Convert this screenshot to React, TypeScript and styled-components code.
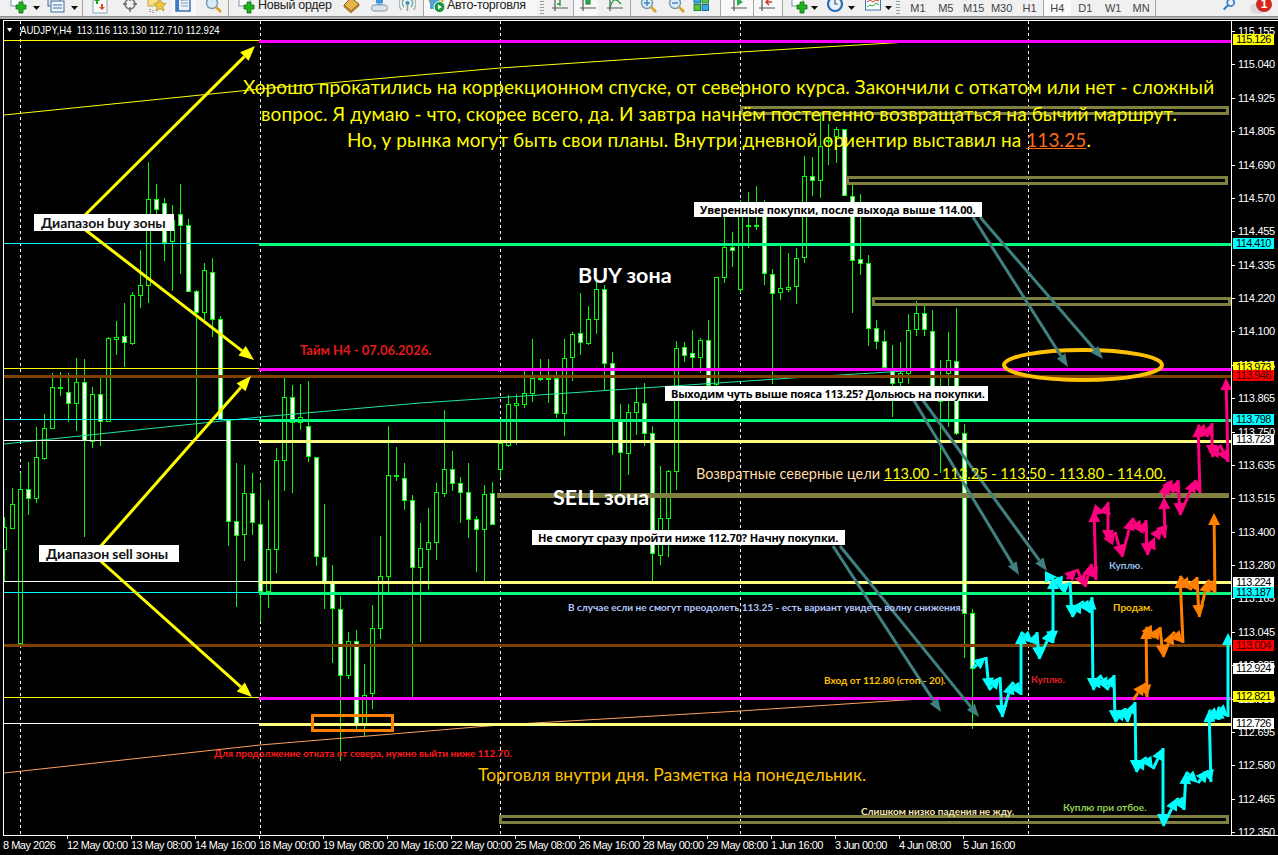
import React, { FC } from 'react';
import styled, { createGlobalStyle } from 'styled-components';

const GlobalStyle = createGlobalStyle`
  html, body { margin: 0; padding: 0; background: #000; }
  #root { width: 1278px; height: 855px; }
`;

// plot origin on the page, notes keep page coordinates
const PLOT_X = 4;
const PLOT_Y = 21;
const PLOT_W = 1227;
const PLOT_H = 814;

type Candle = ['u' | 'd', number, number, number, number];

// type, high, body top, body bottom, low (px), one bar every 8px from x=4
const candles: Candle[] = [
  ['u', 517, 527, 549, 581], ['u', 488, 504, 528, 528], ['u', 473, 489, 643, 643], ['d', 462, 489, 498, 515],
  ['u', 427, 457, 498, 503], ['u', 414, 428, 458, 460], ['u', 373, 387, 428, 429], ['u', 372, 387, 388, 396],
  ['d', 373, 392, 403, 422], ['u', 358, 382, 403, 431], ['d', 359, 382, 440, 537], ['u', 387, 394, 441, 448],
  ['d', 378, 394, 421, 446], ['u', 337, 338, 421, 422], ['u', 321, 337, 339, 355], ['d', 303, 336, 342, 367],
  ['u', 292, 295, 343, 345], ['u', 250, 285, 295, 308], ['u', 162, 199, 285, 303], ['d', 184, 199, 209, 220],
  ['d', 198, 203, 242, 261], ['u', 205, 220, 241, 291], ['d', 184, 214, 225, 274], ['d', 219, 225, 291, 292],
  ['d', 290, 291, 312, 440], ['u', 263, 270, 312, 320], ['d', 258, 272, 319, 337], ['d', 316, 319, 419, 420],
  ['d', 420, 420, 521, 546], ['d', 463, 521, 535, 607], ['u', 465, 493, 534, 561], ['d', 473, 493, 522, 535],
  ['d', 483, 524, 591, 622], ['u', 500, 549, 591, 608], ['u', 448, 460, 549, 573], ['u', 378, 397, 460, 491],
  ['d', 385, 397, 422, 493], ['u', 384, 417, 422, 430], ['d', 381, 426, 456, 462], ['d', 457, 457, 556, 566],
  ['d', 504, 557, 582, 609], ['d', 565, 583, 608, 663], ['d', 596, 609, 675, 761], ['u', 632, 641, 675, 679],
  ['d', 630, 641, 724, 730], ['u', 664, 695, 725, 736], ['u', 605, 628, 693, 709], ['u', 536, 576, 628, 639],
  ['u', 426, 475, 576, 593], ['u', 447, 475, 476, 481], ['d', 463, 478, 500, 510], ['d', 495, 500, 567, 700],
  ['u', 523, 548, 567, 642], ['u', 508, 542, 549, 590], ['u', 483, 492, 542, 560], ['u', 410, 469, 493, 497],
  ['d', 451, 469, 483, 491], ['d', 477, 483, 492, 523], ['d', 463, 492, 519, 538], ['d', 516, 519, 529, 572],
  ['u', 485, 494, 529, 581], ['d', 482, 493, 524, 524], ['u', 422, 443, 469, 478], ['u', 395, 404, 445, 447],
  ['u', 394, 403, 405, 445], ['u', 371, 393, 404, 408], ['u', 339, 378, 393, 402], ['u', 359, 378, 379, 381],
  ['u', 359, 378, 379, 403], ['d', 371, 378, 413, 418], ['u', 339, 358, 413, 436], ['u', 332, 334, 357, 381],
  ['d', 293, 333, 342, 355], ['u', 306, 319, 343, 345], ['u', 281, 289, 319, 334], ['d', 285, 289, 363, 391],
  ['d', 352, 363, 420, 455], ['d', 404, 421, 452, 491], ['u', 404, 412, 453, 475], ['u', 387, 402, 412, 435],
  ['d', 383, 403, 433, 446], ['d', 426, 433, 553, 581], ['u', 466, 518, 555, 565], ['u', 470, 471, 518, 557],
  ['u', 341, 348, 471, 490], ['d', 342, 347, 355, 362], ['d', 330, 353, 357, 371], ['u', 338, 340, 357, 373],
  ['d', 320, 340, 385, 390], ['u', 277, 277, 384, 387], ['u', 217, 247, 277, 283], ['d', 232, 247, 250, 267],
  ['u', 200, 210, 289, 293], ['u', 192, 225, 226, 248], ['u', 186, 225, 226, 230], ['d', 200, 210, 273, 285],
  ['d', 269, 274, 293, 384], ['u', 246, 288, 292, 300], ['u', 253, 287, 289, 292], ['u', 248, 258, 286, 304],
  ['u', 156, 176, 257, 263], ['d', 157, 176, 180, 196], ['u', 115, 146, 180, 198], ['u', 124, 140, 141, 165],
  ['u', 127, 129, 136, 163], ['d', 129, 129, 195, 196], ['d', 185, 196, 260, 313], ['d', 194, 259, 263, 275],
  ['d', 255, 263, 328, 346], ['d', 320, 328, 341, 349], ['d', 330, 341, 367, 370], ['d', 345, 370, 383, 417],
  ['u', 342, 373, 382, 386], ['u', 314, 330, 373, 384], ['u', 301, 313, 329, 336], ['d', 306, 313, 329, 336],
  ['d', 310, 331, 386, 390], ['u', 360, 400, 401, 473], ['u', 332, 360, 373, 427], ['d', 308, 361, 433, 435],
  ['d', 424, 433, 613, 658], ['d', 609, 613, 668, 729],
];

const periods = [20, 260, 500, 740, 1028];

// left thin segment and heavy level, both end at the right of the plot
const levels = [
  { y: 41, thin: '#ffff00', thick: '#ff00ff' },
  { y: 244, thin: '#00ffff', thick: '#00ff7f' },
  { y: 369, thin: '#ffff00', thick: '#ff00ff' },
  { y: 420, thin: '#00ffff', thick: '#00ff7f' },
  { y: 441, thin: '#ffffff', thick: '#ffff80' },
  { y: 582, thin: '#ffffff', thick: '#ffff80' },
  { y: 593, thin: '#00ffff', thick: '#00ff7f' },
  { y: 698, thin: '#ffff00', thick: '#ff00ff' },
  { y: 724, thin: '#ffffff', thick: '#ffff80' },
];

const cyanWave: [number, number][] = [
  [973, 668], [986, 657], [989, 690], [1000, 677], [1002, 717], [1012, 682], [1021, 695], [1021, 632], [1033, 643],
  [1037, 632], [1039, 659], [1052, 630], [1053, 643], [1053, 577], [1057, 577], [1062, 589], [1070, 582], [1072, 617],
  [1082, 601], [1090, 613], [1092, 597], [1093, 690], [1100, 675], [1107, 690], [1114, 675], [1115, 722], [1125, 708],
  [1127, 722], [1135, 702], [1136, 772], [1145, 757], [1153, 769], [1163, 748], [1163, 826], [1177, 798], [1184, 810],
  [1186, 772], [1198, 783], [1208, 770], [1211, 782], [1209, 710], [1219, 720], [1218, 707], [1228, 717], [1228, 633],
];

const pinkWave: [number, number][] = [
  [1067, 579], [1077, 569], [1085, 587], [1091, 564], [1096, 580], [1094, 510], [1105, 513], [1108, 502], [1108, 542],
  [1115, 532], [1122, 557], [1132, 518], [1142, 533], [1146, 520], [1147, 555], [1155, 537], [1162, 527], [1165, 538],
  [1164, 497], [1167, 482], [1173, 493], [1178, 480], [1180, 515], [1195, 480], [1200, 493], [1198, 425], [1207, 437],
  [1212, 423], [1212, 457], [1220, 445], [1228, 462], [1226, 378],
];

const orangeWave: [number, number][] = [
  [1133, 700], [1145, 683], [1147, 697], [1146, 627], [1153, 638], [1160, 627], [1163, 657], [1173, 632], [1183, 643],
  [1180, 576], [1190, 590], [1197, 577], [1199, 617], [1208, 580], [1215, 593], [1214, 513],
];

const priceTicks = [
  '115.155', '115.040', '114.925', '114.805', '114.690', '114.570', '114.455', '114.335', '114.220', '114.100', '113.985',
  '113.865', '113.750', '113.635', '113.515', '113.400', '113.280', '113.165', '113.045', '112.925', '112.810', '112.695',
  '112.580', '112.465', '112.350',
];

const priceTags = [
  { y: 34, bg: '#ffff00', text: '115.126', fg: '#000' },
  { y: 238, bg: '#00ffff', text: '114.410', fg: '#000' },
  { y: 362, bg: '#ffff00', text: '113.973', fg: '#000' },
  { y: 370, bg: '#ff0000', text: '113.946', fg: '#400' },
  { y: 414, bg: '#00ffff', text: '113.798', fg: '#000' },
  { y: 434, bg: '#ffffff', text: '113.723', fg: '#000' },
  { y: 577, bg: '#ffffff', text: '113.224', fg: '#000' },
  { y: 587, bg: '#00ffff', text: '113.187', fg: '#000' },
  { y: 640, bg: '#ff0000', text: '113.004', fg: '#400' },
  { y: 663, bg: '#ffffff', text: '112.924', fg: '#000' },
  { y: 691, bg: '#ffff00', text: '112.821', fg: '#000' },
  { y: 718, bg: '#ffffff', text: '112.726', fg: '#000' },
];

const timeLabels = [
  '8 May 2026', '12 May 00:00', '13 May 08:00', '14 May 16:00', '18 May 00:00', '19 May 08:00', '20 May 16:00', '22 May 00:00',
  '25 May 08:00', '26 May 16:00', '28 May 00:00', '29 May 08:00', '1 Jun 16:00', '3 Jun 00:00', '4 Jun 08:00', '5 Jun 16:00',
];

const timeframes = ['M1', 'M5', 'M15', 'M30', 'H1', 'H4', 'D1', 'W1', 'MN'];

const Arrow: FC<{ from: [number, number]; to: [number, number]; color: string; width?: number; len?: number; half?: number }> = ({
  from,
  to,
  color,
  width = 3,
  len = 12,
  half = 6,
}) => {
  const dx = to[0] - from[0];
  const dy = to[1] - from[1];
  const d = Math.hypot(dx, dy) || 1;
  const ux = dx / d;
  const uy = dy / d;
  const bx = to[0] - ux * len;
  const by = to[1] - uy * len;
  const head = `${to[0]},${to[1]} ${bx - uy * half},${by + ux * half} ${bx + uy * half},${by - ux * half}`;
  return (
    <g>
      <line x1={from[0]} y1={from[1]} x2={bx} y2={by} stroke={color} strokeWidth={width} />
      <polygon points={head} fill={color} />
    </g>
  );
};

const Wave: FC<{ points: [number, number][]; color: string }> = ({ points, color }) => (
  <g>
    {points.slice(1).map((p, i) => (
      <Arrow key={i} from={points[i]} to={p} color={color} />
    ))}
  </g>
);

const ChartDrawing: FC = () => (
  <PlotSvg viewBox={`${PLOT_X} ${PLOT_Y} ${PLOT_W} ${PLOT_H}`}>
    {periods.map((x) => (
      <line key={x} x1={x + 0.5} y1={21} x2={x + 0.5} y2={835} stroke="#fff" strokeDasharray="3 3" shapeRendering="crispEdges" />
    ))}
    <g shapeRendering="crispEdges">
      {candles.map(([type, high, top, bottom, low], i) => {
        const x = 4 + i * 8;
        return (
          <g key={i}>
            <line x1={x + 0.5} y1={high} x2={x + 0.5} y2={low} stroke="#00ff00" />
            <rect
              x={x - 1.5}
              y={top + 0.5}
              width={4}
              height={Math.max(bottom - top, 1)}
              fill={type === 'd' ? '#fff' : '#000'}
              stroke="#00ff00"
            />
          </g>
        );
      })}
    </g>

    <polyline points="4,115 260,89 500,68 740,52 925,41" fill="none" stroke="#ffff00" />
    <polyline points="4,444 260,417 420,403 792,378 905,371" fill="none" stroke="#1fe8a0" />
    <polyline points="4,773 260,745 500,725 740,711 935,698" fill="none" stroke="#ffa060" />

    {levels.map(({ y, thin, thick }) => (
      <g key={y} shapeRendering="crispEdges">
        <line x1={4} y1={y - 0.5} x2={260} y2={y - 0.5} stroke={thin} />
        <line x1={259} y1={y} x2={1231} y2={y} stroke={thick} strokeWidth={3} />
      </g>
    ))}
    <g shapeRendering="crispEdges">
      <line x1={4} y1={376} x2={1231} y2={376} stroke="#804000" strokeWidth={3} />
      <line x1={4} y1={645} x2={1231} y2={645} stroke="#804000" strokeWidth={3} />
      <rect x={497} y={493} width={732} height={5} fill="#808040" />
      <rect x={741.5} y={107.5} width={486} height={6} fill="none" stroke="#808040" strokeWidth={3} />
      <rect x={847.5} y={177.5} width={379} height={6} fill="none" stroke="#808040" strokeWidth={3} />
      <rect x={873.5} y={298.5} width={356} height={6} fill="none" stroke="#808040" strokeWidth={3} />
      <rect x={500.5} y={816.5} width={727} height={6} fill="none" stroke="#808040" strokeWidth={3} />
      <rect x={312.5} y={715.5} width={80} height={15} fill="none" stroke="#ff8000" strokeWidth={3} />
    </g>
    <ellipse cx={1083} cy={365} rx={79} ry={15} fill="none" stroke="#ffc000" strokeWidth={4} />

    <Arrow from={[78, 222]} to={[255, 46]} color="#ffff00" len={15} half={6} />
    <Arrow from={[79, 225]} to={[254, 360]} color="#ffff00" len={15} half={6} />
    <Arrow from={[92, 556]} to={[251, 376]} color="#ffff00" len={15} half={6} />
    <Arrow from={[95, 556]} to={[252, 697]} color="#ffff00" len={15} half={6} />

    <Arrow from={[973, 217]} to={[1068, 367]} color="#408080" len={13} half={5} />
    <Arrow from={[980, 217]} to={[1103, 359]} color="#408080" len={13} half={5} />
    <Arrow from={[913, 399]} to={[1019, 575]} color="#408080" len={13} half={5} />
    <Arrow from={[922, 399]} to={[1047, 571]} color="#408080" len={13} half={5} />
    <Arrow from={[833, 546]} to={[941, 712]} color="#408080" len={13} half={5} />
    <Arrow from={[840, 546]} to={[979, 717]} color="#408080" len={13} half={5} />

    <Wave points={cyanWave} color="#00ffff" />
    <Wave points={pinkWave} color="#ff0080" />
    <Wave points={orangeWave} color="#ff8000" />
  </PlotSvg>
);

const Caret = () => (
  <svg width="7" height="4" viewBox="0 0 7 4">
    <path d="M0 0h7L3.5 4z" fill="#111" />
  </svg>
);

const PlusSheet = () => (
  <svg width="18" height="18" viewBox="0 0 18 18">
    <rect x="1" y="0" width="11" height="9" fill="#fff" stroke="#7d93ae" />
    <path d="M7 5h3V2h4v3h3v4h-3v4h-4V9H7z" transform="translate(-1 3)" fill="#21b321" stroke="#0b6f0b" strokeWidth="0.8" />
  </svg>
);

const Profiles = () => (
  <svg width="18" height="18" viewBox="0 0 18 18">
    <rect x="1" y="0" width="12" height="9" fill="#dbe8f6" stroke="#3f6fa0" />
    <rect x="4" y="4" width="13" height="11" fill="#eef5fc" stroke="#3f6fa0" />
    <path d="M6 8h9M6 11h9" stroke="#3f6fa0" />
  </svg>
);

const Watch = () => (
  <svg width="16" height="18" viewBox="0 0 16 18">
    <rect x="1" y="0" width="14" height="16" fill="#fafafa" stroke="#8aa4c0" />
    <path d="M5 1l3 3H6v3H4V4H2z" fill="#1fa81f" />
    <path d="M10 13l-3-3h2V7h2v3h2z" fill="#e0492a" />
  </svg>
);

const Crosshair = () => (
  <svg width="16" height="18" viewBox="0 0 16 18">
    <circle cx="8" cy="7" r="5" fill="none" stroke="#777" strokeWidth="1.6" />
    <path d="M8 0v4M8 10v5M1 7h4M11 7h4" stroke="#666" strokeWidth="1.4" />
  </svg>
);

const StarFolder = () => (
  <svg width="20" height="18" viewBox="0 0 20 18">
    <rect x="1" y="0" width="10" height="9" fill="#f7e08a" stroke="#c9a63c" />
    <path d="M13 2l2 4 4 .5-3 3 1 4.5-4-2.3-4 2.3 1-4.5-3-3 4-.5z" fill="#f2c73b" stroke="#a8862a" strokeWidth="0.7" />
    <path d="M3 12v4M6 13v3" stroke="#555" strokeDasharray="1 1" />
  </svg>
);

const BlueBook = () => (
  <svg width="16" height="18" viewBox="0 0 16 18">
    <rect x="1" y="0" width="14" height="14" fill="#e9f2fb" stroke="#2f69a8" strokeWidth="1.4" />
    <rect x="1" y="0" width="3" height="14" fill="#3a7cc0" />
    <path d="M6 3h7M6 6h7M6 9h7" stroke="#7f9dbc" />
    <path d="M6 3h2" stroke="#d33" />
  </svg>
);

const Magnifier = ({ sign }: { sign?: '+' | '-' }) => (
  <svg width="18" height="18" viewBox="0 0 18 18">
    <circle cx="7" cy="6" r="5.5" fill="#d8ecfa" stroke="#7a96ad" strokeWidth="1.4" />
    <path d="M11 10l5 5" stroke="#d9a324" strokeWidth="2.6" />
    {sign && <path d={sign === '+' ? 'M4 6h6M7 3v6' : 'M4 6h6'} stroke="#3f7fc0" strokeWidth="1.4" />}
  </svg>
);

const GoldBook = () => (
  <svg width="17" height="18" viewBox="0 0 17 18">
    <path d="M1 8l7-7 8 6-8 7z" fill="#e5b44a" stroke="#8a5f16" />
    <path d="M1 8v2l7 6 8-7V7l-8 7z" fill="#c98f2c" stroke="#8a5f16" strokeWidth="0.6" />
  </svg>
);

const CloudUser = () => (
  <svg width="18" height="18" viewBox="0 0 18 18">
    <rect x="5" y="0" width="7" height="6" fill="#3c94dc" />
    <path d="M6 6l-1 3h7l-1-3z" fill="#74b4e8" />
    <path d="M3 14a3 3 0 0 1 1-6h9a3 3 0 0 1 1 6z" fill="#d9e3ee" stroke="#7f97ad" />
  </svg>
);

const Signal = () => (
  <svg width="17" height="18" viewBox="0 0 17 18">
    <circle cx="8.5" cy="6" r="2" fill="#2f8fc0" />
    <path d="M5 2a6 6 0 0 0 0 8M12 2a6 6 0 0 1 0 8" fill="none" stroke="#5db38a" strokeWidth="1.5" />
    <path d="M2.5 0a10 10 0 0 0 0 13M14.5 0a10 10 0 0 1 0 13" fill="none" stroke="#a9b6c2" strokeWidth="1.5" />
    <path d="M8.5 7v7" stroke="#8a9aa8" strokeWidth="1.5" />
  </svg>
);

const AutoTrade = () => (
  <svg width="18" height="18" viewBox="0 0 18 18">
    <ellipse cx="8" cy="3" rx="7" ry="5" fill="#e8c65a" stroke="#a88a2a" />
    <rect x="2" y="3" width="9" height="9" fill="#4aa0d8" />
    <circle cx="11.5" cy="10" r="5.5" fill="#169a3c" stroke="#fff" />
    <path d="M10 7.5l4 2.5-4 2.5z" fill="#fff" />
  </svg>
);

const AxisIcon: FC<{ kind: 'bar' | 'candle' | 'line' | 'play' | 'shift' }> = ({ kind }) => (
  <svg width="16" height="18" viewBox="0 0 16 18">
    <path d="M3 0v14M0 11h16" stroke="#555" strokeWidth="1.2" />
    {kind === 'bar' && <path d="M8 9V2M8 2h3M5 7h3" stroke="#1d9a3a" strokeWidth="1.4" />}
    {kind === 'candle' && <rect x="6" y="0" width="4" height="7" fill="#1fb94a" stroke="#0e7a2c" />}
    {kind === 'line' && <path d="M3 10c3-9 6-9 11-3" fill="none" stroke="#1d9a3a" strokeWidth="1.3" />}
    {kind === 'play' && <path d="M6 1l6 4-6 4z" fill="#26b14a" />}
    {kind === 'shift' && <path d="M13 5H8M10 2l-3 3 3 3" fill="none" stroke="#c33" strokeWidth="1.5" />}
  </svg>
);

const GridIcon = () => (
  <svg width="17" height="18" viewBox="0 0 17 18">
    <rect x="1" y="0" width="6.5" height="6" fill="#39a7e0" stroke="#1c6ea0" />
    <rect x="9" y="0" width="6.5" height="6" fill="#5cc14a" stroke="#2a8a2a" />
    <rect x="1" y="7.5" width="6.5" height="6" fill="#5cc14a" stroke="#2a8a2a" />
    <rect x="9" y="7.5" width="6.5" height="6" fill="#39a7e0" stroke="#1c6ea0" />
  </svg>
);

const ClockIcon = () => (
  <svg width="18" height="18" viewBox="0 0 18 18">
    <circle cx="9" cy="7" r="7" fill="#e7f2fb" stroke="#2170b5" strokeWidth="2.2" />
    <path d="M9 2v5h3" fill="none" stroke="#555" strokeWidth="1.2" />
  </svg>
);

const IndicatorIcon = () => (
  <svg width="16" height="18" viewBox="0 0 16 18">
    <rect x="0.5" y="0" width="15" height="13" fill="#f7fbff" stroke="#3c78b4" />
    <path d="M2 5l3-2 3 2 3-2 3 1" fill="none" stroke="#d9462a" />
    <path d="M2 10l3-2 3 1 3-3 3 2" fill="none" stroke="#2aa84a" />
  </svg>
);

const SearchIcon = () => (
  <svg width="16" height="18" viewBox="0 0 16 18">
    <circle cx="10" cy="5" r="4" fill="none" stroke="#2e7fd0" strokeWidth="2" />
    <path d="M7 8l-5 5" stroke="#2e7fd0" strokeWidth="2.4" />
  </svg>
);

const App: FC = () => (
  <>
    <GlobalStyle />
    <Page>
      <Toolbar>
        <Slot $w={30} $pad={10}><PlusSheet /></Slot>
        <Slot $w={17} $pad={3}><Caret /></Slot>
        <Slot $w={21} $pad={0}><Profiles /></Slot>
        <Slot $w={14} $pad={3}><Caret /></Slot>
        <Sep />
        <Slot $w={39} $pad={9}><Watch /></Slot>
        <Slot $w={25} $pad={0}><Crosshair /></Slot>
        <Slot $w={25} $pad={0}><StarFolder /></Slot>
        <Slot $w={24} $pad={3} $active><BlueBook /></Slot>
        <Slot $w={32} $pad={9}><Magnifier /></Slot>
        <Sep />
        <Slot $w={29} $pad={9}><PlusSheet /></Slot>
        <ToolText $w={85}>Новый ордер</ToolText>
        <Slot $w={28} $pad={0}><GoldBook /></Slot>
        <Slot $w={28} $pad={0}><CloudUser /></Slot>
        <Slot $w={24} $pad={0}><Signal /></Slot>
        <Sep />
        <Slot $w={23} $pad={4} $active><AutoTrade /></Slot>
        <ToolText $w={90} $active>Авто-торговля</ToolText>
        <Grip />
        <Slot $w={25} $pad={4}><AxisIcon kind="bar" /></Slot>
        <Sep />
        <Slot $w={24} $pad={6} $active><AxisIcon kind="candle" /></Slot>
        <Slot $w={32} $pad={9}><AxisIcon kind="line" /></Slot>
        <Sep />
        <Slot $w={28} $pad={9}><Magnifier sign="+" /></Slot>
        <Slot $w={27} $pad={9}><Magnifier sign="-" /></Slot>
        <Slot $w={34} $pad={7}><GridIcon /></Slot>
        <Sep />
        <Slot $w={32} $pad={10} $active><AxisIcon kind="play" /></Slot>
        <Sep />
        <Slot $w={28} $pad={5} $active><AxisIcon kind="shift" /></Slot>
        <Sep />
        <Slot $w={28} $pad={8}><PlusSheet /></Slot>
        <Slot $w={15} $pad={0}><Caret /></Slot>
        <Slot $w={22} $pad={0}><ClockIcon /></Slot>
        <Slot $w={17} $pad={0}><Caret /></Slot>
        <Slot $w={20} $pad={0}><IndicatorIcon /></Slot>
        <Slot $w={8} $pad={0}><Caret /></Slot>
        <Grip />
        {timeframes.map((tf) => (
          <Timeframe key={tf} $active={tf === 'H4'}>{tf}</Timeframe>
        ))}
        <Sep />
        <Slot $w={80} $pad={66}><SearchIcon /></Slot>
        <Bubble>1</Bubble>
      </Toolbar>
      <ToolbarEdge />
      <ChartWindow>
        <ChartRow>
          <Plot>
            <ChartDrawing />
            <SymbolLine>
              <SymbolMark />
              AUDJPY,H4&nbsp; 113.116 113.130 112.710 112.924
            </SymbolLine>

            <Headline>
              <HeadLine $shift={14}>Хорошо прокатились на коррекционном спуске, от северного курса. Закончили с откатом или нет - сложный</HeadLine>
              <HeadLine>вопрос. Я думаю - что, скорее всего, да. И завтра начнём постепенно возвращаться на бычий маршрут.</HeadLine>
              <HeadLine>
                Но, у рынка могут быть свои планы. Внутри дневной ориентир выставил на <PriceLink>113.25</PriceLink>.
              </HeadLine>
            </Headline>

            <ZoneLabel $x={34} $y={214} $w={140}>Диапазон buy зоны</ZoneLabel>
            <ZoneLabel $x={39} $y={545} $w={140}>Диапазон sell зоны</ZoneLabel>

            <ZoneTitle $x={578} $y={262}>BUY зона</ZoneTitle>
            <ZoneTitle $x={553} $y={484}>SELL зона</ZoneTitle>

            <Callout $x={694} $y={202} $w={288} $track={-0.07}>Уверенные покупки, после выхода выше 114.00.</Callout>
            <Callout $x={665} $y={386} $w={323} $track={-0.2}>Выходим чуть выше пояса 113.25? Дольюсь на покупки.</Callout>
            <Callout $x={532} $y={530} $w={313} $track={-0.15}>Не смогут сразу пройти ниже 112.70? Начну покупки.</Callout>

            <SmallNote $x={300} $y={343} $color="#e41b1b" $size={13}>Тайм Н4 - 07.06.2026.</SmallNote>
            <SmallNote $x={568} $y={600} $color="#b4c6ff">В случае если не смогут преодолеть 113.25 - есть вариант увидеть волну снижения.</SmallNote>
            <SmallNote $x={824} $y={673} $color="#ffc000">Вход от 112.80 (стоп - 20).</SmallNote>
            <SmallNote $x={1031} $y={672} $color="#e02020">Куплю.</SmallNote>
            <SmallNote $x={1109} $y={558} $color="#8dbce8">Куплю.</SmallNote>
            <SmallNote $x={1113} $y={600} $color="#ffc000">Продам.</SmallNote>
            <SmallNote $x={214} $y={746} $color="#ff1a1a">Для продолжение отката от севера, нужно выйти ниже 112.70.</SmallNote>
            <SmallNote $x={861} $y={804} $color="#f5e6b4">Слишком низко падения не жду.</SmallNote>
            <SmallNote $x={1063} $y={800} $color="#92d050">Куплю при отбое.</SmallNote>

            <TargetsNote>
              Возвратные северные цели <TargetLink>113.00 - 113.25 - 113.50 - 113.80 - 114.00.</TargetLink>
            </TargetsNote>
            <TradeNote>Торговля внутри дня. Разметка на понедельник.</TradeNote>
          </Plot>
          <PriceAxis>
            {priceTicks.map((p) => (
              <PriceTick key={p}>{p}</PriceTick>
            ))}
            {priceTags.map((t) => (
              <PriceTag key={t.text} $y={t.y} $bg={t.bg} $fg={t.fg}>{t.text}</PriceTag>
            ))}
          </PriceAxis>
        </ChartRow>
        <TimeAxis>
          {timeLabels.map((t, i) => (
            <TimeCell key={t} $tick={i > 0}>
              <TimeText>{t}</TimeText>
            </TimeCell>
          ))}
        </TimeAxis>
      </ChartWindow>
    </Page>
  </>
);

const Page = styled.div`
  width: 1278px;
  height: 855px;
  display: flex;
  flex-direction: column;
  overflow: hidden;
  background: #000;
`;

const Toolbar = styled.div`
  height: 16px;
  flex: none;
  display: flex;
  align-items: stretch;
  overflow: hidden;
  position: relative;
  isolation: isolate;
  background: #f0f0f0;
`;

const Slot = styled.div<{ $w: number; $pad: number; $active?: boolean }>`
  width: ${(p) => p.$w}px;
  padding-left: ${(p) => p.$pad}px;
  box-sizing: border-box;
  flex: none;
  display: flex;
  align-items: flex-end;
  padding-bottom: 1px;
  background: ${(p) => (p.$active ? '#f8f8f8' : 'transparent')};
  > svg[height='4'] {
    margin-bottom: 5px;
  }
`;

const Sep = styled.div`
  width: 1px;
  flex: none;
  background: #a6a6a6;
`;

const Grip = styled.div`
  width: 4px;
  flex: none;
  margin: 1px 4px 1px 3px;
  background: repeating-linear-gradient(to bottom, #9a9a9a 0 1px, transparent 1px 3px);
`;

const ToolText = styled.div<{ $w: number; $active?: boolean }>`
  width: ${(p) => p.$w}px;
  flex: none;
  font: 12.5px/14px 'Liberation Sans', Arial, sans-serif;
  letter-spacing: -0.3px;
  color: #222;
  white-space: nowrap;
  background: ${(p) => (p.$active ? '#f8f8f8' : 'transparent')};
  margin-top: -2px;
`;

const Timeframe = styled.div<{ $active: boolean }>`
  width: 27.9px;
  flex: none;
  text-align: center;
  font: 11px/16px 'Liberation Sans', Arial, sans-serif;
  color: #444;
  background: ${(p) => (p.$active ? '#fafafa' : 'transparent')};
  box-shadow: ${(p) => (p.$active ? 'inset 1px 0 0 #a6a6a6' : 'none')};
`;

const Bubble = styled.div`
  position: absolute;
  right: 6px;
  top: -3px;
  width: 16px;
  height: 15px;
  border-radius: 50%;
  background: #d4261c;
  color: #fff;
  text-align: center;
  font: bold 12px/15px 'Liberation Sans', Arial, sans-serif;
  &::before {
    content: '';
    position: absolute;
    z-index: -1;
    left: -6px;
    top: 6px;
    width: 16px;
    height: 11px;
    border-radius: 50%;
    background: #d5d9de;
  }
`;

const ToolbarEdge = styled.div`
  height: 4px;
  flex: none;
  box-sizing: border-box;
  background: #b0b0b0;
  border-top: 1px solid #8c8c8c;
  border-bottom: 1px solid #000;
`;

const ChartWindow = styled.div`
  flex: 1;
  min-height: 0;
  display: flex;
  flex-direction: column;
  margin-left: 3px;
`;

const ChartRow = styled.div`
  height: 816px;
  flex: none;
  display: flex;
  box-sizing: border-box;
  border-top: 1px solid #fff;
  border-bottom: 1px solid #fff;
  border-left: 1px solid #fff;
`;

const Plot = styled.div`
  width: ${PLOT_W}px;
  height: ${PLOT_H}px;
  flex: none;
  position: relative;
  overflow: hidden;
  background: #000;
`;

const PlotSvg = styled.svg`
  display: block;
  width: 100%;
  height: 100%;
`;

const SymbolLine = styled.div`
  position: absolute;
  left: 3px;
  top: 2px;
  display: flex;
  align-items: center;
  gap: 9px;
  font: 11px/14px 'Liberation Sans', Arial, sans-serif;
  color: #fff;
  white-space: pre;
  transform: scaleX(0.87);
  transform-origin: left center;
`;

const SymbolMark = styled.span`
  width: 0;
  height: 0;
  border-left: 3px solid transparent;
  border-right: 3px solid transparent;
  border-top: 4px solid #fff;
`;

const Headline = styled.div`
  position: absolute;
  left: ${229 - PLOT_X}px;
  top: ${74 - PLOT_Y}px;
  width: 980px;
  text-align: center;
  color: #ffff00;
  font: 19px/26.5px Lato, 'Open Sans', sans-serif;
  letter-spacing: 0.1px;
  white-space: nowrap;
`;

const HeadLine = styled.div<{ $shift?: number }>`
  padding-left: ${(p) => p.$shift ?? 0}px;
`;

const PriceLink = styled.span`
  color: #ff6a1a;
  text-decoration: underline;
`;

const ZoneLabel = styled.div<{ $x: number; $y: number; $w: number }>`
  position: absolute;
  left: ${(p) => p.$x - PLOT_X}px;
  top: ${(p) => p.$y - PLOT_Y}px;
  width: ${(p) => p.$w}px;
  height: 17px;
  padding-left: 7px;
  box-sizing: border-box;
  background: #fff;
  color: #111;
  font: bold 14px/17px Lato, sans-serif;
  letter-spacing: -0.1px;
  white-space: nowrap;
`;

const ZoneTitle = styled.div<{ $x: number; $y: number }>`
  position: absolute;
  left: ${(p) => p.$x - PLOT_X}px;
  top: ${(p) => p.$y - PLOT_Y}px;
  color: #fff;
  font: bold 21.5px/26px Lato, sans-serif;
  white-space: nowrap;
`;

const Callout = styled.div<{ $x: number; $y: number; $w: number; $track: number }>`
  position: absolute;
  left: ${(p) => p.$x - PLOT_X}px;
  top: ${(p) => p.$y - PLOT_Y}px;
  width: ${(p) => p.$w}px;
  height: 15px;
  padding-left: 6px;
  box-sizing: border-box;
  background: #fff;
  color: #000;
  font: bold 11px/15px 'Open Sans', sans-serif;
  letter-spacing: ${(p) => p.$track}px;
  white-space: nowrap;
`;

const SmallNote = styled.div<{ $x: number; $y: number; $color: string; $size?: number }>`
  position: absolute;
  left: ${(p) => p.$x - PLOT_X}px;
  top: ${(p) => p.$y - PLOT_Y}px;
  color: ${(p) => p.$color};
  font: bold ${(p) => p.$size ?? 10}px/14px Lato, sans-serif;
  white-space: nowrap;
`;

const TargetsNote = styled.div`
  position: absolute;
  left: ${696 - PLOT_X}px;
  top: ${464 - PLOT_Y}px;
  color: #ffdca8;
  font: 14.5px/20px Lato, sans-serif;
  white-space: nowrap;
`;

const TargetLink = styled.span`
  color: #ffff00;
  text-decoration: underline;
`;

const TradeNote = styled.div`
  position: absolute;
  left: ${478 - PLOT_X}px;
  top: ${764 - PLOT_Y}px;
  color: #ffc000;
  font: 17.5px/22px Lato, sans-serif;
  white-space: nowrap;
`;

const PriceAxis = styled.div`
  flex: 1;
  position: relative;
  box-sizing: border-box;
  padding-top: 3px;
  display: grid;
  grid-auto-rows: 33.39px;
  border-left: 1px solid #fff;
`;

const PriceTick = styled.div`
  position: relative;
  padding-left: 6px;
  font: 11px/14px 'Liberation Sans', Arial, sans-serif;
  letter-spacing: -0.3px;
  color: #fff;
  &::before {
    content: '';
    position: absolute;
    left: 0;
    top: 7px;
    width: 3px;
    height: 1px;
    background: #fff;
  }
`;

const PriceTag = styled.div<{ $y: number; $bg: string; $fg: string }>`
  position: absolute;
  left: 1px;
  top: ${(p) => p.$y - PLOT_Y}px;
  width: 41px;
  height: 11px;
  padding-left: 3px;
  box-sizing: border-box;
  background: ${(p) => p.$bg};
  color: ${(p) => p.$fg};
  font: 11px/11px 'Liberation Sans', Arial, sans-serif;
  letter-spacing: -0.6px;
  overflow: hidden;
`;

const TimeAxis = styled.div`
  display: flex;
  height: 20px;
  flex: none;
`;

const TimeCell = styled.div<{ $tick: boolean }>`
  width: 64px;
  flex: none;
  position: relative;
  &::before {
    content: '';
    display: ${(p) => (p.$tick ? 'block' : 'none')};
    position: absolute;
    left: 0;
    top: 0;
    width: 1px;
    height: 3px;
    background: #fff;
  }
`;

const TimeText = styled.div`
  padding-top: 2px;
  font: 11px/14px 'Liberation Sans', Arial, sans-serif;
  color: #fff;
  white-space: nowrap;
  letter-spacing: -0.5px;
`;

export default App;
